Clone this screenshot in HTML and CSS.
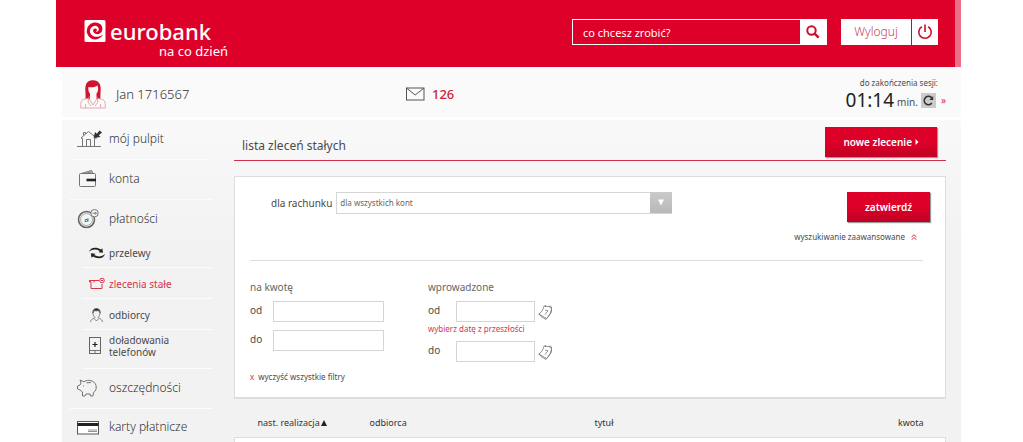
FILE: index.html
```html
<!DOCTYPE html>
<html lang="pl">
<head>
<meta charset="utf-8">
<title>eurobank – lista zleceń stałych</title>
<link rel="stylesheet" href="styles.css">
</head>
<body>
<header class="top">
  <a class="brand" href="#">
    <svg class="brand-mark" viewBox="0 0 22 22" width="22" height="22"><rect x="0.500" width="21" height="22" rx="1.500" fill="#fff"/><path d="M19 14.500A8.500 8.500 0 1 1 16.500 4.300C19.500 7 19 13 14.500 14C11 14.700 8.500 12.500 9.200 10C9.800 8.300 12 8 12.800 9.500C13.200 10.500 12.500 11.300 11.700 11.200C12.500 12.200 14.600 11.500 14.800 9.500C15 7 12.500 5.300 10 5.900C6.500 6.700 5 10.500 6.500 13.500C8.700 17.500 14.500 18 19 14.500Z" fill="#dd0029"/></svg>
    <span class="brand-name">eurobank</span>
    <span class="brand-tag">na co dzień</span>
  </a>
  <form class="search">
    <input class="search-box" type="text" placeholder="co chcesz zrobić?" aria-label="co chcesz zrobić?">
    <button class="search-go" type="button" aria-label="Szukaj"><svg viewBox="0 0 14 14" width="14" height="14" fill="none" stroke="#c8102e" stroke-width="2"><circle cx="5.500" cy="5.500" r="4.200"/><path d="M8.600 8.600L12.700 12.700" stroke-width="2.400"/></svg></button>
  </form>
  <div class="logout">
    <button class="logout-text" type="button">Wyloguj</button>
    <button class="logout-icon" type="button" aria-label="Wyloguj"><svg viewBox="0 0 16 16" width="16" height="16" fill="none" stroke="#c8102e" stroke-width="1.600"><path d="M4.800 2.800A6.200 6.200 0 1 0 11.200 2.800M8 0.500V8"/></svg></button>
  </div>
</header>

<div class="user-bar">
  <div class="user">
    <svg viewBox="0 0 26 30" width="26" height="30"><path d="M5.500 20C6 14 4.500 10 6 5.500C7.500 0 18 -0.500 20 5.500C21.500 10 20 14 20.500 20L16.500 20V14.500C19 11 18 9 17.500 6.500C14.500 8.500 11 8.500 8.500 8C8 11 8.500 13 10 14.500V20Z" fill="#d0142f"/><path d="M10 17C10 19 7 19.500 3.500 20.500C1 21.200 0.700 24 0.700 29H25.300C25.300 24 25 21.200 22.500 20.500C19 19.500 16 19 16.500 17M9 19.500L13 26L17 19.500M9 19.500L8 23L11 27M17 19.500L18 23L15 27M5.500 25V29M20.500 25V29" fill="none" stroke="#e0a0a8" stroke-width="0.900"/></svg>
    <span>Jan 1716567</span>
  </div>
  <a class="mail" href="#">
    <svg viewBox="0 0 19 14" width="19" height="14" fill="none" stroke="#555" stroke-width="1"><rect x="0.500" y="1" width="17.500" height="12"/><path d="M0.500 1L9.200 8L18 1"/></svg>
    <span>126</span>
  </a>
  <div class="session">
    <span class="session-label">do zakończenia sesji:</span>
    <div class="session-row">
      <span class="clock">01:14</span>
      <span class="unit">min.</span>
      <button class="refresh" type="button" aria-label="Odśwież"><svg viewBox="0 0 15 15" width="15" height="15"><path d="M10.800 10A4.200 4.200 0 1 1 10.800 5" fill="none" stroke="#333" stroke-width="1.500"/><path d="M12.200 3V7H8.400Z" fill="#333"/></svg></button>
      <a class="more" href="#">»</a>
    </div>
  </div>
</div>

<div class="panel">
  <nav class="side">
    <a class="item" href="#"><svg viewBox="0 0 26 20" width="26" height="20" fill="none" stroke="#666" stroke-width="0.900"><path d="M0 17.500H24M5.500 17.500V9.500L4 9L11.500 2.500L19.500 9L17.500 9.500V17.500M9.500 17.500V10.500H13.500V17.500M6.500 6.500V3.500H8.500V5"/><path d="M16.500 9L18 3L19.800 4.700L22.500 1.500L25 3.500L21.800 6.300L23.500 8Z" fill="#333" stroke="none"/></svg><span>mój pulpit</span></a>
    <a class="item" href="#"><svg viewBox="0 0 26 20" width="26" height="20" fill="none" stroke="#666" stroke-width="0.900"><rect x="2.500" y="4.500" width="16" height="13" rx="1"/><path d="M5 4.300L14.500 1.500L16 4.300M9 4.300L15 2.800"/><path d="M9.500 11H19" stroke="#222" stroke-width="2.600"/></svg><span>konta</span></a>
    <a class="item short" href="#"><svg viewBox="0 0 26 20" width="26" height="20" fill="none" stroke="#666"><circle cx="9.500" cy="10.500" r="8" stroke-width="1.600"/><circle cx="9.500" cy="10.500" r="6" stroke-width="0.500"/><circle cx="17.500" cy="4.200" r="3.700" fill="#f6f6f6" stroke-width="0.900"/><path d="M15.500 4.200H19M18 2.700L19.500 4.200L18 5.700" stroke-width="0.900"/><text x="9.500" y="13" text-anchor="middle" class="coin">zł</text></svg><span>płatności</span></a>
    <div class="sub">
      <a class="subitem" href="#"><svg viewBox="0 0 16 14" width="16" height="14" fill="#222"><path d="M0 6C1 1.500 7 0.500 12 3.500L13.300 2.200L14 6.700L9.500 6.200L10.800 4.900C6.500 2.800 3 3.300 0 6Z"/><path d="M16 8C15 12.500 9 13.500 4 10.500L2.500 11.800L1.800 7.300L6.500 7.800L5.200 9.100C9.500 11.200 13 10.700 16 8Z"/></svg><span>przelewy</span></a>
      <a class="subitem active" href="#"><svg viewBox="0 0 16 14" width="16" height="14" fill="none" stroke="#d8344c" stroke-width="1"><path d="M10 3.500H0.500L2 5.500V11.500H13V7M0.500 3.500V5H2M5 3.500V5.500"/><circle cx="13" cy="3.500" r="2.300"/><path d="M12 3.500H14.200"/></svg><span>zlecenia stałe</span></a>
      <a class="subitem" href="#"><svg viewBox="0 0 16 14" width="16" height="14" fill="none" stroke="#666" stroke-width="0.800"><path d="M4 4V6C4.500 8 5.500 9 6 9.500C5.500 10.500 2 10.500 1.500 14M11 4V6C10.500 8 9.500 9 9 9.500C9.500 10.500 13 10.500 13.500 14M5 10.500L7.500 13L10 10.500"/><path d="M3.800 5C3 -1 12 -1 11.200 5L10 2.800H5Z" fill="#222"/></svg><span>odbiorcy</span></a>
      <a class="subitem tall" href="#"><svg viewBox="0 0 16 18" width="16" height="18" fill="none" stroke="#555"><rect x="0.500" y="0.500" width="11" height="16" stroke-width="0.900"/><path d="M1 13.500H11M6 13.500V16" stroke-width="0.800"/><path d="M3.500 7.500H8.500M6 5V10" stroke="#222" stroke-width="1.200"/></svg><span>doładowania<br>telefonów</span></a>
    </div>
    <a class="item" href="#"><svg viewBox="0 0 26 20" width="26" height="20" fill="none" stroke="#666" stroke-width="0.900"><path d="M3 2L7 3.800C11 0.800 18 2.500 19 7.500C20 11.500 18 13.500 16.500 14.500L16 18H13.500L13 16H9L8 18H5.500L5.500 14L3 12L0.500 11V8L3 7L4 5ZM9.500 4.800L14 4.500M6.500 7.500V8.300"/></svg><span>oszczędności</span></a>
    <a class="item last" href="#"><svg viewBox="0 0 26 20" width="26" height="20"><rect x="0.500" y="4.500" width="21" height="12.500" fill="#fff" stroke="#555"/><path d="M0.500 7.500H21.500" stroke="#222" stroke-width="3"/><path d="M11 13H20M11 14.500H20" stroke="#777" stroke-width="0.800"/></svg><span>karty płatnicze</span></a>
  </nav>

  <main class="content">
    <div class="heading">
      <h1>lista zleceń stałych</h1>
      <button class="red" type="button">nowe zlecenie <svg viewBox="0 0 4 6" width="4" height="6"><path d="M0.500 0L3.500 3L0.500 6Z" fill="#fff"/></svg></button>
    </div>

    <form class="card">
      <div class="main-filter">
        <label for="account">dla rachunku</label>
        <div class="picker">
          <select id="account"><option>dla wszystkich kont</option></select>
          <span class="arrow"><svg viewBox="0 0 8 7" width="8" height="7"><path d="M1 0.500H7L4 6.500Z" fill="#fff"/></svg></span>
        </div>
        <button class="red" type="button">zatwierdź</button>
      </div>
      <a class="advanced" href="#"><span>wyszukiwanie zaawansowane</span><svg viewBox="0 0 6 6" width="6" height="6" fill="none" stroke="#d8344c" stroke-width="1"><path d="M0.500 3L3 0.800L5.500 3M0.500 5.800L3 3.600L5.500 5.800"/></svg></a>
      <div class="filters">
        <fieldset class="amount">
          <legend>na kwotę</legend>
          <div class="field"><label for="a1">od</label><input id="a1" type="text"></div>
          <div class="field"><label for="a2">do</label><input id="a2" type="text"></div>
        </fieldset>
        <fieldset class="dates">
          <legend>wprowadzone</legend>
          <div class="field"><label for="d1">od</label><input id="d1" type="text"><button class="cal" type="button" aria-label="Kalendarz"><svg viewBox="0 0 15 16" width="15" height="16" fill="none" stroke="#777" stroke-width="0.800"><path d="M6 2L13.500 3C13.500 8 11.500 12 8.500 14.500L0.800 10C4 8 5.500 5 6 2ZM0.800 10L3 12.500L8 15.500L13.500 8V3M7.500 1V3M12 1.500V3.800M7 6L10 6.800L7 10.500"/></svg></button></div>
          <p class="error">wybierz datę z przeszłości</p>
          <div class="field"><label for="d2">do</label><input id="d2" type="text"><button class="cal" type="button" aria-label="Kalendarz"><svg viewBox="0 0 15 16" width="15" height="16" fill="none" stroke="#777" stroke-width="0.800"><path d="M6 2L13.500 3C13.500 8 11.500 12 8.500 14.500L0.800 10C4 8 5.500 5 6 2ZM0.800 10L3 12.500L8 15.500L13.500 8V3M7.500 1V3M12 1.500V3.800M7 6L10 6.800L7 10.500"/></svg></button></div>
        </fieldset>
      </div>
      <a class="clear" href="#"><span class="x">x</span><span>wyczyść wszystkie filtry</span></a>
    </form>

    <table class="orders">
      <thead><tr><th class="c-date">nast. realizacja<svg viewBox="0 0 6 6" width="6" height="6"><path d="M0 6L3 0L6 6Z" fill="#222"/></svg></th><th class="c-to">odbiorca</th><th>tytuł</th><th class="c-sum">kwota</th></tr></thead>
      <tbody><tr><td colspan="4"></td></tr></tbody>
    </table>
  </main>
</div>
</body>
</html>
```
FILE: styles.css
```css
* { box-sizing: border-box; }
body { margin: 0; padding: 0 62px 0 56px; background: #fff; color: #4a4a4a; font-family: "Noto Sans", "Open Sans", sans-serif; font-size: 8px; line-height: 12px; }
a { color: inherit; text-decoration: none; }
button, input, select { font: inherit; color: inherit; margin: 0; padding: 0; border: 0; border-radius: 0; }
svg { display: block; flex: none; }

.top { display: flex; align-items: flex-start; height: 67px; padding: 19px 17px 0 28px; background: #dd0029; border-right: 6px solid #ee7088; color: #fff; }
.brand { display: grid; grid-template-columns: 22px auto; column-gap: 4px; align-items: center; margin-right: auto; }
.brand-name { font-size: 22px; line-height: 24px; font-weight: 500; }
.brand-tag { grid-column: 2; padding-left: 49px; font-size: 13px; line-height: 16px; }
.search { display: flex; width: 255px; height: 26px; margin-right: 14px; border: 1px solid #fff; }
.search-box { flex: 1; min-width: 0; padding: 2px 10px 0; background: #dd0029; font-size: 11px; outline: 0; }
.search-box::placeholder { color: #fff; opacity: 1; }
.search-go { display: flex; align-items: center; justify-content: center; width: 26px; background: #fff; }
.logout { display: flex; gap: 1px; height: 26px; }
.logout-text { width: 70px; background: #fff; color: #c5405a; font-size: 12px; font-weight: 300; }
.logout-icon { display: flex; align-items: center; justify-content: center; width: 26px; background: #fff; }

.user-bar { display: flex; justify-content: space-between; height: 50px; margin: 0 0 3px 6px; padding: 0 15px 0 18px; background: #fafafa; }
.user { display: flex; align-items: center; gap: 10px; width: 326px; padding-top: 3px; color: #333; font-size: 13px; font-weight: 300; }
.mail { display: flex; align-items: center; gap: 7px; margin-right: auto; padding-top: 4px; color: #cf1c33; font-size: 13px; font-weight: 500; }
.session { display: flex; flex-direction: column; align-items: flex-end; padding-top: 10px; }
.session-label { padding-right: 8px; }
.session-row { display: flex; align-items: center; gap: 3px; height: 22px; }
.clock { color: #222; font-size: 19px; }
.unit { padding-top: 4px; font-size: 10px; }
.refresh { background: #c9cccb; }
.more { padding-left: 2px; color: #d8344c; font-size: 10px; }

.panel { display: flex; margin-left: 6px; background: linear-gradient(#f9f9f9, #f2f2f2 120px); }
.side { display: flex; flex-direction: column; width: 172px; padding: 0 22px 0 8px; }
.item { display: flex; align-items: center; gap: 6px; height: 40px; padding-left: 7px; padding-bottom: 2px; border-bottom: 1px solid #fcfcfc; color: #333; font-size: 12px; font-weight: 300; }
.item.short { height: 37px; padding-bottom: 0; border: 0; }
.item.last { height: 36px; padding-bottom: 0; border: 0; }
.coin { font-size: 6px; font-weight: 500; fill: #333; stroke: none; }
.sub { padding-left: 12px; }
.subitem { display: flex; align-items: center; gap: 4px; height: 31px; padding-top: 2px; padding-left: 7px; border-bottom: 1px solid #fcfcfc; font-size: 10px; line-height: 12px; }
.subitem.tall { height: 39px; padding-top: 0; padding-bottom: 6px; }
.subitem.active { color: #d8344c; }

.content { flex: 1; min-width: 0; padding: 7px 15px 0 0; }
.heading { display: flex; justify-content: space-between; align-items: flex-start; height: 34px; margin-bottom: 15px; padding: 0 9px 0 8px; border-bottom: 1px solid #d0304e; }
h1 { margin: 11px 0 0; font-size: 12px; line-height: 16px; font-weight: 400; }
.red { display: inline-flex; align-items: center; justify-content: center; gap: 3px; height: 30px; padding: 0 18px; background: linear-gradient(#dd0029 50%, #bf0224); box-shadow: 1px 1px 1px #999; color: #fff; font-size: 10px; font-weight: 600; }
.card { padding: 15px 15px 14px; background: #fff; border: 1px solid #ddd; border-bottom-width: 2px; }
.main-filter { display: flex; align-items: flex-start; padding-left: 21px; }
.main-filter label { margin-right: 4px; font-size: 10px; line-height: 22px; }
.picker { position: relative; flex: 1; max-width: 336px; height: 22px; margin-right: auto; }
.picker select { appearance: none; width: 100%; height: 100%; padding: 0 26px 0 3px; border: 1px solid #d5d5d5; background: #fff; color: #666; }
.arrow { position: absolute; top: 0; right: 0; display: flex; align-items: center; justify-content: center; width: 22px; height: 21px; background: linear-gradient(#cacaca, #b8b8b8); pointer-events: none; }
.advanced { display: flex; align-items: center; justify-content: flex-end; gap: 6px; margin-right: 7px; padding: 9px 6px 17px 0; border-bottom: 1px solid #ddd; }
.filters { display: flex; padding-top: 19px; }
fieldset { margin: 0; padding: 0; border: 0; font-size: 10px; }
legend { height: 21px; padding: 1px 0 0; color: #666; }
.amount { width: 178px; }
.field { display: flex; align-items: flex-start; }
.field label { line-height: 18px; }
.field input { height: 21px; border: 1px solid #d5d5d5; background: #fff; }
.amount label { width: 23px; }
.amount input { width: 111px; }
.amount .field + .field { margin-top: 8px; }
.dates label { width: 28px; }
.dates input { width: 79px; }
.cal { margin: 3px 0 0 3px; background: none; }
.error { margin: 1px 0 6px; color: #d8344c; font-size: 8px; }
.clear { display: inline-flex; gap: 4px; margin-top: 9px; }
.x { color: #d8344c; }

.orders { width: 100%; border-collapse: collapse; table-layout: fixed; }
.orders th { height: 38px; padding: 10px 0 0; text-align: left; font-size: 9px; font-weight: 400; color: #333; }
.orders th svg { display: inline-block; margin-left: 1px; }
.orders .c-date { width: 135px; padding-left: 23px; }
.orders .c-to { width: 225px; }
.orders .c-sum { padding-right: 22px; text-align: right; }
.orders td { height: 6px; padding: 0; border: 1px solid #ddd; border-bottom: 0; background: #fff; }
```
